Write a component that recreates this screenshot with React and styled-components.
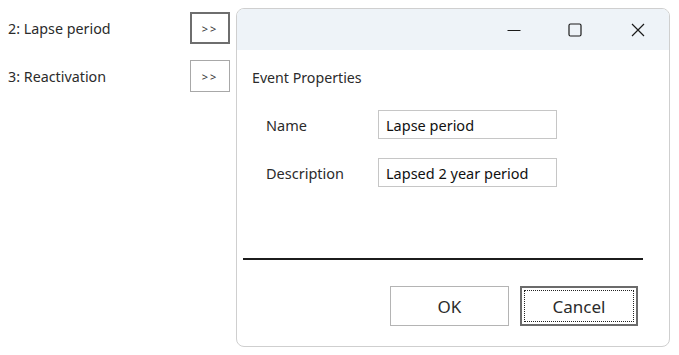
import React from 'react'
import styled, { createGlobalStyle } from 'styled-components'

const GlobalStyle = createGlobalStyle`
    body {
        margin: 0;
        background: #ffffff;
        font-family: "Noto Sans", "Open Sans", sans-serif;
    }
`

const Page = styled.div`
    display: flex;
    align-items: flex-start;
    width: 679px;
    height: 355px;
    overflow: hidden;
`

const EventList = styled.div`
    width: 236px;
    padding: 12px 0 0 8px;
    box-sizing: border-box;
    display: flex;
    flex-direction: column;
    gap: 16px;
`

const EventRow = styled.div`
    display: flex;
    align-items: center;
    height: 32px;
`

const EventLabel = styled.span`
    width: 182px;
    font-size: 14.3px;
    color: #2b2b2b;
`

const OpenButton = styled.button`
    width: 40px;
    height: 32px;
    box-sizing: border-box;
    background: #ffffff;
    border: ${props => props.focused ? '2px solid #6e6e6e' : '1px solid #a8a8a8'};
    font-family: "Noto Sans", sans-serif;
    font-size: 11px;
    letter-spacing: 2px;
    color: #333;
    padding: 0;
`

const Dialog = styled.div`
    margin-top: 8px;
    width: 434px;
    height: 339px;
    box-sizing: border-box;
    border: 1px solid #cfcfcf;
    border-radius: 8px;
    overflow: hidden;
    display: flex;
    flex-direction: column;
    background: #ffffff;
`

const TitleBar = styled.div`
    height: 41px;
    background: #eef3f8;
    display: flex;
    align-items: center;
    justify-content: flex-end;
    padding-right: 24px;
`

const CaptionButton = styled.div`
    width: 14px;
    height: 14px;
    margin-left: ${props => props.gap}px;
    display: flex;
    align-items: center;
    justify-content: center;
`

const Body = styled.div`
    padding: 18px 0 0 15px;
    flex: 1;
    display: flex;
    flex-direction: column;
`

const Heading = styled.div`
    font-size: 14.2px;
    color: #2b2b2b;
    height: 20px;
    line-height: 20px;
`

const Form = styled.div`
    margin: 22px 0 0 14px;
    display: grid;
    grid-template-columns: 112px 179px;
    row-gap: 19px;
    align-items: center;
`

const FieldLabel = styled.label`
    font-size: 14.5px;
    color: #2b2b2b;
`

const Field = styled.div`
    height: 29px;
    box-sizing: border-box;
    border: 1px solid #c6c6c6;
    padding: 0 7px;
    display: flex;
    align-items: center;
    font-size: 14.5px;
    color: #111;
`

const Separator = styled.div`
    margin: 71px 0 0 -9px;
    width: 400px;
    height: 2px;
    background: #1c1c1c;
`

const Footer = styled.div`
    margin: 26px 0 0 138px;
    display: flex;
    gap: 11px;
`

const DialogButton = styled.button`
    position: relative;
    width: ${props => props.focused ? 118 : 119}px;
    height: 40px;
    box-sizing: border-box;
    background: #ffffff;
    border: ${props => props.focused ? '2px solid #6b6b6b' : '1px solid #b4b4b4'};
    font-family: "Noto Sans", sans-serif;
    font-size: 17px;
    color: #2b2b2b;
    padding: 1px 0 0;

    &::after {
        content: '';
        display: ${props => props.focused ? 'block' : 'none'};
        position: absolute;
        inset: 2px;
        border: 1px dotted #222;
    }
`

const Minimize = () => (
    <svg width="14" height="14" viewBox="0 0 14 14">
        <path d="M0.5 7.5h13" stroke="#1a1a1a" strokeWidth="1.2" />
    </svg>
)

const Maximize = () => (
    <svg width="14" height="14" viewBox="0 0 14 14">
        <rect x="1" y="1" width="12" height="12" rx="1.5" fill="none" stroke="#1a1a1a" strokeWidth="1.2" />
    </svg>
)

const Close = () => (
    <svg width="14" height="14" viewBox="0 0 14 14">
        <path d="M1 1L13 13M13 1L1 13" stroke="#1a1a1a" strokeWidth="1.2" />
    </svg>
)

const App = () => {
    const events = [
        { id: 2, name: 'Lapse period', focused: true },
        { id: 3, name: 'Reactivation', focused: false },
    ]

    return (
        <Page>
            <GlobalStyle />
            <EventList>
                {events.map(event => (
                    <EventRow key={event.id}>
                        <EventLabel>{event.id}: {event.name}</EventLabel>
                        <OpenButton focused={event.focused}>&gt;&gt;</OpenButton>
                    </EventRow>
                ))}
            </EventList>
            <Dialog>
                <TitleBar>
                    <CaptionButton gap={0}><Minimize /></CaptionButton>
                    <CaptionButton gap={47}><Maximize /></CaptionButton>
                    <CaptionButton gap={49}><Close /></CaptionButton>
                </TitleBar>
                <Body>
                    <Heading>Event Properties</Heading>
                    <Form>
                        <FieldLabel>Name</FieldLabel>
                        <Field>Lapse period</Field>
                        <FieldLabel>Description</FieldLabel>
                        <Field>Lapsed 2 year period</Field>
                    </Form>
                    <Separator />
                    <Footer>
                        <DialogButton>OK</DialogButton>
                        <DialogButton focused>Cancel</DialogButton>
                    </Footer>
                </Body>
            </Dialog>
        </Page>
    )
}

export default App
